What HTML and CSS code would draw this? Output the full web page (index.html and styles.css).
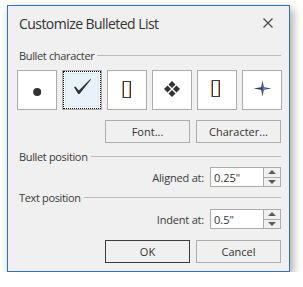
FILE: index.html
```html
<!DOCTYPE html>
<html lang="en">
<head>
    <meta charset="UTF-8">
    <title>Customize Bulleted List</title>
    <link rel="stylesheet" href="styles.css">
</head>
<body>
    <div class="dialog">
        <div class="titlebar">
            <span class="title">Customize Bulleted List</span>
            <svg class="close" width="10" height="10" viewBox="0 0 10 10">
                <path d="M0.5 0.5 L9.5 9.5 M9.5 0.5 L0.5 9.5" stroke="#4a4a4a" stroke-width="1.2" fill="none"/>
            </svg>
        </div>
        <div class="content">
            <div class="group first"><span>Bullet character</span><div class="rule"></div></div>
            <div class="bullets">
                <div class="bullet">
                    <svg width="38" height="38" viewBox="0 0 38 38"><circle cx="19.2" cy="21" r="4" fill="#333"/></svg>
                </div>
                <div class="bullet selected">
                    <svg width="38" height="38" viewBox="0 0 38 38"><path d="M11 16.2 L12.5 15.4 L15.8 19.4 L27.3 8 L28 8.6 L16.5 22.9 L15.2 22.9 Z" fill="#333"/></svg>
                </div>
                <div class="bullet">
                    <svg width="38" height="38" viewBox="0 0 38 38"><rect x="14.5" y="10.5" width="7" height="16" fill="none" stroke="#d8a15c"/><rect x="15.5" y="10.5" width="7" height="16" fill="none" stroke="#2f3b58"/></svg>
                </div>
                <div class="bullet">
                    <svg width="38" height="38" viewBox="0 0 38 38"><g fill="#333"><path d="M19 10 L22.5 13.5 L19 17 L15.5 13.5 Z"/><path d="M14.5 14.5 L18 18 L14.5 21.5 L11 18 Z"/><path d="M23.5 14.5 L27 18 L23.5 21.5 L20 18 Z"/><path d="M19 19 L22.5 22.5 L19 26 L15.5 22.5 Z"/></g></svg>
                </div>
                <div class="bullet">
                    <svg width="38" height="38" viewBox="0 0 38 38"><rect x="13.5" y="9.5" width="7" height="16" fill="none" stroke="#d8a15c"/><rect x="14.5" y="9.5" width="7" height="16" fill="none" stroke="#2f3b58"/></svg>
                </div>
                <div class="bullet">
                    <svg width="38" height="38" viewBox="0 0 38 38"><path d="M19.5 9.5 L20.8 16.2 L28.5 17.5 L20.8 18.8 L19.5 25.5 L18.2 18.8 L10.5 17.5 L18.2 16.2 Z" fill="#2e3850"/><path d="M19.5 11.5 L20.4 16.6 L25 17.5 L20.4 18.4 L19.5 23.5 Z" fill="#5f82c4"/></svg>
                </div>
            </div>
            <div class="button-row">
                <button class="btn">Font...</button>
                <button class="btn">Character...</button>
            </div>
            <div class="group second"><span>Bullet position</span><div class="rule"></div></div>
            <div class="field-row">
                <label class="field-label">Aligned at:</label>
                <div class="spin">
                    <input class="spin-input" type="text" value="0.25&quot;">
                    <div class="spin-buttons">
                        <div class="spin-btn"><span class="arrow-up"></span></div>
                        <div class="spin-btn"><span class="arrow-down"></span></div>
                    </div>
                </div>
            </div>
            <div class="group third"><span>Text position</span><div class="rule"></div></div>
            <div class="field-row last">
                <label class="field-label">Indent at:</label>
                <div class="spin">
                    <input class="spin-input" type="text" value="0.5&quot;">
                    <div class="spin-buttons">
                        <div class="spin-btn"><span class="arrow-up"></span></div>
                        <div class="spin-btn"><span class="arrow-down"></span></div>
                    </div>
                </div>
            </div>
            <div class="button-row footer">
                <button class="btn default">OK</button>
                <button class="btn">Cancel</button>
            </div>
        </div>
    </div>
</body>
</html>
```

FILE: styles.css
```css
body {
    margin: 0;
    background: #fff;
    font-family: 'Open Sans', 'Noto Sans', sans-serif;
    color: #3b3b3b;
}
.dialog {
    margin: 5px 0 0 7px;
    width: 283px;
    height: 267px;
    box-sizing: border-box;
    border: 1px solid #2b74c4;
    background: #f0f0f0;
    box-shadow: 3px 4px 9px rgba(0, 0, 0, 0.35);
    display: flex;
    flex-direction: column;
}
.titlebar {
    height: 34px;
    display: flex;
    align-items: center;
    justify-content: space-between;
    padding: 0 16px 0 11px;
}
.title {
    font-size: 14px;
    letter-spacing: -0.55px;
    color: #333;
}
.close {
    display: block;
}
.content {
    padding: 0 7px 0 9px;
    display: flex;
    flex-direction: column;
}
.group {
    display: flex;
    align-items: center;
    height: 16px;
    padding-left: 2px;
    font-size: 11px;
    letter-spacing: -0.35px;
}
.group.first {
    margin-top: 7px;
}
.group.second {
    margin-top: 5px;
}
.group.third {
    margin-top: 2px;
}
.group span {
    margin-right: 3px;
}
.rule {
    flex: 1;
    height: 1px;
    background: #bcbcbc;
    margin-right: 1px;
}
.bullets {
    display: flex;
    gap: 5px;
    margin-top: 7px;
}
.bullet {
    width: 40px;
    height: 40px;
    box-sizing: border-box;
    border: 1px solid #acacac;
    background: #fff;
}
.bullet svg {
    display: block;
}
.bullet.selected {
    outline: 1px dotted #000;
    outline-offset: -2px;
    background: #e8f2fb;
    box-shadow: inset 0 0 0 2px #fff, inset 0 0 0 3px #d3e7f8;
}
.button-row {
    display: flex;
    justify-content: flex-end;
    gap: 6px;
    padding-right: 1px;
    margin-top: 10px;
}
.btn {
    width: 85px;
    height: 23px;
    box-sizing: border-box;
    border: 1px solid #adadad;
    background: #f0f0f0;
    font-family: inherit;
    font-size: 11px;
    color: #333;
    padding: 0;
}
.btn.default {
    border-color: #3c3c3c;
}
.footer {
    margin-top: 11px;
}
.field-row {
    display: flex;
    justify-content: flex-end;
    align-items: center;
    gap: 6px;
    padding-right: 1px;
    margin-top: 3px;
}
.field-row.last {
    margin-top: 4px;
}
.field-label {
    font-size: 11px;
    letter-spacing: -0.2px;
}
.spin {
    display: flex;
    width: 71px;
    height: 20px;
    box-sizing: border-box;
    border: 1px solid #acacac;
    background: #fff;
}
.spin-input {
    flex: 1;
    min-width: 0;
    border: 0;
    padding: 0 0 0 3px;
    font-family: inherit;
    font-size: 11px;
    color: #333;
    background: transparent;
    outline: none;
}
.spin-buttons {
    width: 16px;
    border-left: 1px solid #acacac;
    display: flex;
    flex-direction: column;
    background: #f0f0f0;
}
.spin-btn {
    flex: 1;
    display: flex;
    align-items: center;
    justify-content: center;
}
.spin-btn + .spin-btn {
    border-top: 1px solid #acacac;
}
.arrow-up {
    width: 0;
    height: 0;
    border-left: 4px solid transparent;
    border-right: 4px solid transparent;
    border-bottom: 4px solid #5a5a5a;
}
.arrow-down {
    width: 0;
    height: 0;
    border-left: 4px solid transparent;
    border-right: 4px solid transparent;
    border-top: 4px solid #5a5a5a;
}
```
